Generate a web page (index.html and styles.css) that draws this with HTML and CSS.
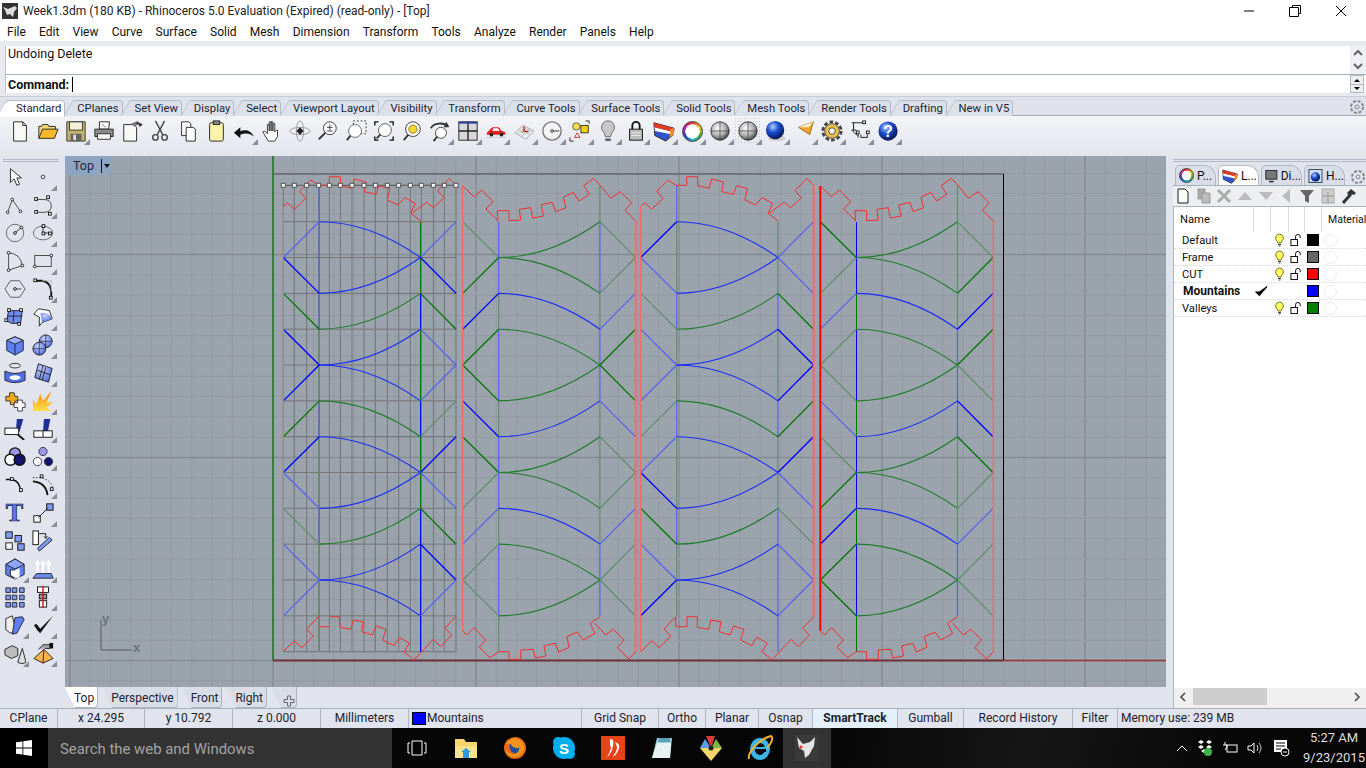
FILE: index.html
```html
<!DOCTYPE html>
<html lang="en">
<head>
<meta charset="UTF-8">
<title>Week1.3dm - Rhinoceros 5.0</title>
<link rel="stylesheet" href="styles.css">
</head>
<body>
<svg class="defs" aria-hidden="true">
  <defs>
    <radialGradient id="steel" cx="40%" cy="35%" r="70%"><stop offset="0" stop-color="#fff"/><stop offset="0.6" stop-color="#aaa"/><stop offset="1" stop-color="#333"/></radialGradient>
    <radialGradient id="navy" cx="38%" cy="32%" r="70%"><stop offset="0" stop-color="#bcd0ff"/><stop offset="0.45" stop-color="#1c4fd0"/><stop offset="1" stop-color="#04124e"/></radialGradient>
    <radialGradient id="pale" cx="40%" cy="30%" r="75%"><stop offset="0" stop-color="#c6d3fb"/><stop offset="1" stop-color="#4c68d8"/></radialGradient>
    <linearGradient id="flame" x1="0" y1="0" x2="0" y2="1"><stop offset="0" stop-color="#f58a00"/><stop offset="1" stop-color="#ffe14a"/></linearGradient>
    <symbol id="bulb" viewBox="0 0 12 14"><path d="M6 1a4 4 0 0 0-2.500 7c.7.7 1 1.300 1 2h3c0-.7.3-1.300 1-2A4 4 0 0 0 6 1z" fill="#ffff66" stroke="#77771a"/><path d="M4.500 11.500h3M5 13h2" stroke="#444" fill="none"/></symbol>
    <symbol id="lock" viewBox="0 0 14 14"><rect x="1" y="6.500" width="7" height="6.500" fill="#fff" stroke="#000"/><path d="M6 6.500V3.500a2.500 2.500 0 0 1 5 0V5" fill="none" stroke="#000"/></symbol>
    <symbol id="layersicon" viewBox="0 0 24 24"><path d="M1 3l22 6-1 7-8 7L2 17z" fill="#2f56c8" stroke="#222"/><path d="M1.500 8l21 5-.3 3-20-4z" fill="#fff"/><path d="M1 3l22 6-.5 4L1.500 8z" fill="#e23b1e"/><path d="M23 9l-1 7-4 3 1-9z" fill="#f09030"/></symbol>
  </defs>
</svg>

<div class="app">
  <header class="titlebar">
    <svg class="appicon" width="16" height="16" viewBox="0 0 16 16"><rect width="16" height="16" fill="#333"/><path d="M1 4l5 2 7-3 2 2-3 4-1 5-3-3-3 1-2-5z" fill="#ddd"/></svg>
    <span class="title">Week1.3dm (180 KB) - Rhinoceros 5.0 Evaluation (Expired) (read-only) - [Top]</span>
    <div class="winctl">
      <svg width="12" height="12" viewBox="0 0 12 12"><path d="M1 6h10" stroke="#000"/></svg>
      <svg width="12" height="12" viewBox="0 0 12 12"><path d="M3.500 2.500v-2h8v8h-2M.5 2.500h9v9h-9z" fill="none" stroke="#000"/></svg>
      <svg width="12" height="12" viewBox="0 0 12 12"><path d="M1 1l10 10M11 1L1 11" stroke="#000"/></svg>
    </div>
  </header>

  <nav class="menubar">
    <span>File</span><span>Edit</span><span>View</span><span>Curve</span><span>Surface</span><span>Solid</span><span>Mesh</span><span>Dimension</span><span>Transform</span><span>Tools</span><span>Analyze</span><span>Render</span><span>Panels</span><span>Help</span>
  </nav>

  <section class="command">
    <div class="history">
      <span>Undoing Delete</span>
      <div class="updown">
        <svg width="10" height="8" viewBox="0 0 10 8"><path d="M1 6l4-4 4 4" fill="none" stroke="#666" stroke-width="2"/></svg>
        <svg width="10" height="8" viewBox="0 0 10 8"><path d="M1 2l4 4 4-4" fill="none" stroke="#666" stroke-width="2"/></svg>
      </div>
    </div>
    <div class="prompt">
      <b>Command:</b><i class="caret"></i>
      <div class="spin"><em class="up"></em><em class="down"></em></div>
    </div>
  </section>

  <div class="tabstrip">
    <span class="tab active">Standard</span>
    <span class="tab">CPlanes</span>
    <span class="tab">Set View</span>
    <span class="tab">Display</span>
    <span class="tab">Select</span>
    <span class="tab">Viewport Layout</span>
    <span class="tab">Visibility</span>
    <span class="tab">Transform</span>
    <span class="tab">Curve Tools</span>
    <span class="tab">Surface Tools</span>
    <span class="tab">Solid Tools</span>
    <span class="tab">Mesh Tools</span>
    <span class="tab">Render Tools</span>
    <span class="tab">Drafting</span>
    <span class="tab">New in V5</span>
    <svg class="cog" width="16" height="16" viewBox="0 0 16 16"><circle cx="8" cy="8" r="2" fill="none" stroke="#888"/><circle cx="8" cy="8" r="6" fill="none" stroke="#888" stroke-width="2" stroke-dasharray="3 1.700"/></svg>
  </div>

  <div class="toolbar">
    <div class="btn"><svg viewBox="0 0 24 24"><path d="M5 2h10l4 4v17H5z" fill="#f8f8f4" stroke="#222"/><path d="M15 2v4h4" fill="none" stroke="#222"/></svg></div>
    <div class="btn"><svg viewBox="0 0 24 24"><path d="M2 20V7h3l1-2h6l1 2h7v3" fill="#f4d77a" stroke="#222"/><path d="M2 20l4-10h17l-4 10z" fill="#f6b92c" stroke="#222"/></svg></div>
    <div class="btn more"><svg viewBox="0 0 24 24"><path d="M2 2h20v21H2z" fill="#c4b268" stroke="#333"/><rect x="5" y="2" width="14" height="9" fill="#f4f0d8" stroke="#333"/><rect x="6" y="15" width="12" height="8" fill="#666"/><rect x="9" y="16" width="3" height="6" fill="#ddd"/></svg></div>
    <div class="btn"><svg viewBox="0 0 24 24"><path d="M7 2h11l-1 8H7z" fill="#fff" stroke="#222"/><path d="M2 10h20v8H2z" fill="#8d8d8d" stroke="#222"/><path d="M5 15h14v6H5z" fill="#fff" stroke="#222"/><path d="M10 5l4 3" stroke="#777"/></svg></div>
    <div class="btn"><svg viewBox="0 0 24 24"><path d="M3 5h11l3 3v15H3z" fill="#f8f8f4" stroke="#222"/><path d="M11 4l7-3 3 3-7 3z" fill="#777"/><path d="M17 3l5 2-2 2" fill="none" stroke="#333" stroke-width="2"/></svg></div>
    <div class="btn"><svg viewBox="0 0 24 24"><path d="M7 1l8 15M17 1L9 16" stroke="#444" stroke-width="1.500"/><circle cx="7" cy="19" r="3" fill="none" stroke="#444" stroke-width="1.500"/><circle cx="17" cy="19" r="3" fill="none" stroke="#444" stroke-width="1.500"/></svg></div>
    <div class="btn"><svg viewBox="0 0 24 24"><path d="M5 2h8l2 2v13H5z" fill="#fff" stroke="#222"/><path d="M10 8h8l2 2v13H10z" fill="#fff" stroke="#222"/></svg></div>
    <div class="btn"><svg viewBox="0 0 24 24"><rect x="5" y="3" width="15" height="20" rx="2" fill="#fbf3a8" stroke="#222"/><rect x="9" y="1" width="7" height="4" fill="#888" stroke="#222"/></svg></div>
    <div class="btn more"><svg viewBox="0 0 24 24"><path d="M1 14l7-6v4c6-2 11-1 15 6-5-4-10-4-15-2v4z" fill="#111"/></svg></div>
    <div class="btn"><svg viewBox="0 0 24 24"><path d="M8 23L2 13l2-1 3 3V5h2v7V2h2v10V2h2v10V4h2v9l2-2h1v7l-3 5z" fill="#fff" stroke="#333"/></svg></div>
    <div class="btn"><svg viewBox="0 0 24 24"><ellipse cx="12" cy="12" rx="11" ry="4" fill="none" stroke="#999"/><ellipse cx="12" cy="12" rx="4" ry="11" fill="none" stroke="#999"/><path d="M12 8l-4 4h8zM12 16l4-4H8z" fill="#222"/></svg></div>
    <div class="btn"><svg viewBox="0 0 24 24"><circle cx="14" cy="9" r="7" fill="#fff" stroke="#333"/><path d="M9 14l-7 7" stroke="#333" stroke-width="2"/><path d="M11 8h6M14 5v6M11 12h6" stroke="#333"/></svg></div>
    <div class="btn"><svg viewBox="0 0 24 24"><rect x="9" y="1" width="14" height="14" fill="none" stroke="#333" stroke-dasharray="2 2"/><circle cx="11" cy="12" r="7" fill="#fff" stroke="#666"/><path d="M6 17l-4 5" stroke="#333" stroke-width="2"/></svg></div>
    <div class="btn"><svg viewBox="0 0 24 24"><path d="M2 6V2h4M18 2h4v4M2 18v4h4M18 22h4v-4" fill="none" stroke="#111" stroke-width="1.500"/><circle cx="13" cy="11" r="7" fill="#fff" stroke="#555"/><path d="M8 16l-4 4" stroke="#333" stroke-width="2"/></svg></div>
    <div class="btn"><svg viewBox="0 0 24 24"><circle cx="13" cy="10" r="8" fill="#fff" stroke="#333"/><circle cx="13" cy="10" r="4.500" fill="#f2d433" stroke="#8a7a20"/><path d="M8 16l-5 6" stroke="#333" stroke-width="2"/></svg></div>
    <div class="btn more"><svg viewBox="0 0 24 24"><path d="M2 9a11 8 0 0 1 19-2" fill="none" stroke="#333" stroke-width="2"/><path d="M19 2l3 6-6 0z" fill="#333"/><circle cx="13" cy="14" r="6" fill="#fff" stroke="#444"/><path d="M9 18l-4 5" stroke="#333" stroke-width="2"/></svg></div>
    <div class="btn more"><svg viewBox="0 0 24 24"><rect x="2" y="2" width="20" height="20" fill="#d8d8d8" stroke="#222"/><path d="M12 2v20M2 12h20" stroke="#222" stroke-width="1.500"/><rect x="2" y="2" width="20" height="2" fill="#2743a8"/></svg></div>
    <div class="btn more"><svg viewBox="0 0 24 24"><path d="M2 14l3-3 3-3h7l3 4 4 1v3H2z" fill="#e02020"/><path d="M9 9h5l2 3H8z" fill="#fff"/><circle cx="7" cy="16" r="2" fill="#222"/><circle cx="18" cy="16" r="2" fill="#222"/><path d="M1 19h22" stroke="#ccc"/></svg></div>
    <div class="btn more"><svg viewBox="0 0 24 24"><path d="M2 14l9-8 12 6-9 9z" fill="none" stroke="#aaa"/><path d="M6 10l12 6M10 7l11 6M5 15l9-8M9 18l9-8" stroke="#bbb"/><path d="M12 12V7M12 12l5 1" stroke="#c22" stroke-width="1.500"/><path d="M12 12l-3 2" stroke="#292"/></svg></div>
    <div class="btn more"><svg viewBox="0 0 24 24"><circle cx="12" cy="12" r="10" fill="#f4f4f4" stroke="#777" stroke-width="1.500"/><circle cx="12" cy="12" r="1.500" fill="#fff" stroke="#333"/><path d="M13 12h7" stroke="#333"/></svg></div>
    <div class="btn more"><svg viewBox="0 0 24 24"><circle cx="8" cy="7" r="4" fill="#f4e04a" stroke="#555"/><rect x="13" y="6" width="8" height="8" fill="#f4d000" stroke="#333"/><path d="M6 19l3-5 3 5z" fill="#f4f4f4" stroke="#b33"/><path d="M18 1h4v3M1 19v4h4" fill="none" stroke="#222"/></svg></div>
    <div class="btn more"><svg viewBox="0 0 24 24"><path d="M12 1a7 7 0 0 0-5 12c1 1 2 3 2 5h6c0-2 1-4 2-5a7 7 0 0 0-5-12z" fill="#c8c8c8" stroke="#666"/><path d="M9 20h6v3H9z" fill="#666"/></svg></div>
    <div class="btn more"><svg viewBox="0 0 24 24"><rect x="5" y="10" width="14" height="12" fill="#bbb" stroke="#111"/><path d="M8 10V6a4 4 0 0 1 8 0v4" fill="none" stroke="#111" stroke-width="2"/><path d="M7 14h10M7 17h10" stroke="#eee"/></svg></div>
    <div class="btn more"><svg><use href="#layersicon"/></svg></div>
    <div class="btn more"><span class="wheel"></span></div>
    <div class="btn more"><svg viewBox="0 0 24 24"><circle cx="12" cy="12" r="10" fill="url(#steel)" stroke="#333"/><path d="M2 12h20M12 2v20" stroke="#444" stroke-width="0.800"/></svg></div>
    <div class="btn more dotted"><svg viewBox="0 0 24 24"><circle cx="12" cy="12" r="10" fill="url(#steel)" stroke="#333"/><path d="M2 12h20M12 2v20" stroke="#444" stroke-width="0.800"/></svg></div>
    <div class="btn more"><svg viewBox="0 0 24 24"><ellipse cx="13" cy="20" rx="10" ry="3" fill="#ccc"/><circle cx="11" cy="11" r="10" fill="url(#navy)"/></svg></div>
    <div class="btn more nudge"><svg viewBox="0 0 24 24"><path d="M4 8L20 2l-4 14z" fill="#f4a12c" stroke="#8a6a20"/><path d="M4 8l16-6-5 6z" fill="#fff3c0"/></svg></div>
    <div class="btn more"><svg viewBox="0 0 24 24"><circle cx="12" cy="12" r="8" fill="#e8c04a" stroke="#444"/><circle cx="12" cy="12" r="10" fill="none" stroke="#444" stroke-width="3" stroke-dasharray="4 2.300"/><circle cx="12" cy="12" r="3.500" fill="#fff" stroke="#444"/></svg></div>
    <div class="btn more"><svg viewBox="0 0 24 24"><path d="M3 3h5M3 11h5M5 3v8M8 3h9M13 19h7M10 14v5M13 19v-3M20 19v-3M3 11l6 6" fill="none" stroke="#111"/><rect x="15" y="1" width="3" height="3" fill="#fff" stroke="#111"/><rect x="8" y="12" width="3" height="3" fill="#fff" stroke="#111"/><rect x="19" y="12" width="3" height="3" fill="#fff" stroke="#111"/></svg></div>
    <div class="btn more"><svg viewBox="0 0 24 24"><circle cx="12" cy="12" r="10.500" fill="url(#navy)"/><text x="12" y="18" text-anchor="middle" class="qmark">?</text></svg></div>
  </div>

  <div class="workspace">
    <aside class="tools">
      <div class="grip"></div>
      <div class="toolgrid">
        <div class="btn"><svg viewBox="0 0 24 24"><path d="M7 3v15l4-4 3 7 3-1-3-7h5z" fill="#fff" stroke="#222"/></svg></div>
        <div class="btn more"><svg viewBox="0 0 24 24"><circle cx="12" cy="12" r="2" fill="#fff" stroke="#333"/></svg></div>
        <div class="btn"><svg viewBox="0 0 24 24"><path d="M4 20L9 6l9 13" fill="none" stroke="#444"/><circle cx="4" cy="20" r="1.500" fill="#fff" stroke="#222"/><circle cx="9" cy="6" r="1.500" fill="#fff" stroke="#222"/><circle cx="18" cy="19" r="1.500" fill="#fff" stroke="#222"/></svg></div>
        <div class="btn more"><svg viewBox="0 0 24 24"><path d="M5 6h8q8 0 8 7 0 7-8 7H5" fill="none" stroke="#444"/><rect x="3" y="4" width="3" height="3" fill="#fff" stroke="#111"/><rect x="16" y="2" width="3" height="3" fill="#fff" stroke="#111"/><rect x="3" y="18" width="3" height="3" fill="#fff" stroke="#111"/><rect x="18" y="20" width="3" height="3" fill="#fff" stroke="#111"/></svg></div>
        <div class="btn"><svg viewBox="0 0 24 24"><circle cx="12" cy="12" r="9.500" fill="none" stroke="#666"/><path d="M12 12l7-6" stroke="#333"/><circle cx="12" cy="12" r="1.500" fill="#fff" stroke="#111"/><circle cx="19" cy="6" r="1.500" fill="#fff" stroke="#111"/></svg></div>
        <div class="btn more"><svg viewBox="0 0 24 24"><ellipse cx="12" cy="12" rx="10.500" ry="7.500" fill="none" stroke="#666"/><path d="M12 12h8M12 12V5" stroke="#333"/><rect x="11" y="3" width="3" height="3" fill="#fff" stroke="#111"/><rect x="11" y="11" width="3" height="3" fill="#fff" stroke="#111"/><rect x="18" y="11" width="3" height="3" fill="#fff" stroke="#111"/></svg></div>
        <div class="btn"><svg viewBox="0 0 24 24"><path d="M5 3q13 1 15 14L5 22z" fill="none" stroke="#444"/><circle cx="5" cy="3" r="1.500" fill="#fff" stroke="#111"/><circle cx="20" cy="17" r="1.500" fill="#fff" stroke="#111"/><circle cx="5" cy="22" r="1.500" fill="#fff" stroke="#111"/></svg></div>
        <div class="btn more"><svg viewBox="0 0 24 24"><rect x="3" y="6" width="18" height="12" fill="none" stroke="#444"/><circle cx="3" cy="18" r="1.500" fill="#fff" stroke="#111"/><circle cx="21" cy="6" r="1.500" fill="#fff" stroke="#111"/></svg></div>
        <div class="btn"><svg viewBox="0 0 24 24"><path d="M7 3h10l6 9-6 9H7L1 12z" fill="none" stroke="#555"/><path d="M12 12h7" stroke="#333"/><circle cx="12" cy="12" r="1.500" fill="#fff" stroke="#111"/></svg></div>
        <div class="btn more"><svg viewBox="0 0 24 24"><path d="M4 3h7q9 1 10 12v7" fill="none" stroke="#111" stroke-width="2"/><path d="M11 3h10v12" fill="none" stroke="#bbb"/><rect x="2" y="1" width="3" height="3" fill="#fff" stroke="#111"/><rect x="19" y="20" width="3" height="3" fill="#fff" stroke="#111"/></svg></div>
        <div class="btn"><svg viewBox="0 0 24 24"><path d="M5 5h15l-2 14H8l-5-3z" fill="#6d8ce8" stroke="#223"/><path d="M11 5l-1 13M4 11h16" stroke="#223"/><rect x="4" y="3" width="3" height="3" fill="#fff" stroke="#111"/><rect x="17" y="3" width="3" height="3" fill="#fff" stroke="#111"/><rect x="1" y="14" width="3" height="3" fill="#fff" stroke="#111"/><rect x="15" y="18" width="3" height="3" fill="#fff" stroke="#111"/></svg></div>
        <div class="btn more"><svg viewBox="0 0 24 24"><path d="M2 9l5-6 12 2 3 9-11 4-3 4V12z" fill="#fff" stroke="#222"/><path d="M9 8q8-3 13 6l-11 4z" fill="url(#pale)"/></svg></div>
        <div class="btn"><svg viewBox="0 0 24 24"><path d="M3 7l9-4 9 4v11l-9 5-9-5z" fill="#5f7ef0" stroke="#223"/><path d="M3 7l9 4 9-4-9-4z" fill="#9db2fa" stroke="#223"/><path d="M12 11v12" stroke="#223"/></svg></div>
        <div class="btn more"><svg viewBox="0 0 24 24"><circle cx="15" cy="8" r="7" fill="url(#pale)" stroke="#223"/><circle cx="8" cy="16" r="7" fill="url(#pale)" stroke="#223"/><path d="M8 9v14M1 16h14M15 1v14M8 8h14" stroke="#223" stroke-width="0.700"/></svg></div>
        <div class="btn"><svg viewBox="0 0 24 24"><ellipse cx="12" cy="4" rx="6" ry="2.500" fill="none" stroke="#333"/><path d="M1 10q11 5 22 0v10q-11 5-22 0z" fill="#4f6fe8" stroke="#223"/><ellipse cx="12" cy="17" rx="6" ry="2.500" fill="#fff"/></svg></div>
        <div class="btn more"><svg viewBox="0 0 24 24"><path d="M7 2l15 5-4 15-15-5z" fill="url(#pale)" stroke="#223"/><path d="M6 9l14 5M12 4L8 19M15 6l-4 14" stroke="#223"/></svg></div>
        <div class="btn"><svg viewBox="0 0 24 24"><path d="M2 7h4V3h5l1 4h3v5h-3l-1 4H7v-4H2z" fill="#f0a818" stroke="#333"/><path d="M11 14h4v-3h5v3h3v5h-3v4h-5v-4h-4z" fill="#fff" stroke="#333"/></svg></div>
        <div class="btn more"><svg viewBox="0 0 24 24"><path d="M1 23V11l4 4L9 4l3 8 9-11-5 13 7-1-7 6 5 4z" fill="url(#flame)"/></svg></div>
        <div class="btn"><svg viewBox="0 0 24 24"><path d="M14 1h7l-4 14h-4z" fill="#1d2f98"/><rect x="1" y="11" width="15" height="7" fill="#fff" stroke="#111"/><path d="M15 18l7 6" stroke="#111" stroke-width="2"/></svg></div>
        <div class="btn more"><svg viewBox="0 0 24 24"><path d="M13 1h7l-3 15h-5z" fill="#1d2f98"/><rect x="2" y="14" width="20" height="7" fill="#fff" stroke="#111"/><path d="M12 14v7" stroke="#111"/></svg></div>
        <div class="btn"><svg viewBox="0 0 24 24"><circle cx="12" cy="8" r="6" fill="#9a97e8" stroke="#111" stroke-width="1.500"/><circle cx="7" cy="15" r="6" fill="#fff" stroke="#111" stroke-width="1.500"/><circle cx="17" cy="15" r="6" fill="#14146c" stroke="#111" stroke-width="1.500"/></svg></div>
        <div class="btn more"><svg viewBox="0 0 24 24"><circle cx="12" cy="6" r="4.500" fill="#9a97e8" stroke="#334"/><circle cx="6" cy="17" r="4.500" fill="#fff" stroke="#334"/><circle cx="18" cy="17" r="4.500" fill="#14146c" stroke="#334"/></svg></div>
        <div class="btn"><svg viewBox="0 0 24 24"><path d="M2 6h7q9 2 9 14" fill="none" stroke="#111" stroke-width="1.500"/><rect x="7" y="4" width="3" height="3" fill="#fff" stroke="#111"/><rect x="17" y="16" width="3" height="3" fill="#fff" stroke="#111"/></svg></div>
        <div class="btn more"><svg viewBox="0 0 24 24"><path d="M1 8q14 1 16 15" fill="none" stroke="#111" stroke-width="2"/><path d="M1 4h8q12 2 14 13" fill="none" stroke="#111" stroke-dasharray="1.500 2"/><rect x="9" y="1" width="3" height="3" fill="#fff" stroke="#111"/><rect x="20" y="15" width="3" height="3" fill="#fff" stroke="#111"/></svg></div>
        <div class="btn"><span class="bigt">T</span></div>
        <div class="btn more"><svg viewBox="0 0 24 24"><rect x="2" y="15" width="7" height="7" fill="#fff" stroke="#111"/><rect x="16" y="2" width="7" height="7" fill="#7e9bf0" stroke="#111"/><path d="M7 17l10-10" stroke="#111"/></svg></div>
        <div class="btn"><svg viewBox="0 0 24 24"><rect x="2" y="2" width="7" height="7" fill="#7e9bf0" stroke="#111"/><rect x="12" y="6" width="7" height="7" fill="#7e9bf0" stroke="#111"/><rect x="2" y="14" width="7" height="7" fill="#fff" stroke="#111"/><rect x="15" y="15" width="7" height="7" fill="#7e9bf0" stroke="#111"/></svg></div>
        <div class="btn"><svg viewBox="0 0 24 24"><rect x="1" y="1" width="6" height="15" fill="#fff" stroke="#111"/><path d="M8 23l-2-3L19 8l3 3z" fill="#7e9bf0" stroke="#223"/><path d="M8 4h7v5M13 7l2 2 2-2" fill="none" stroke="#111"/></svg></div>
        <div class="btn more"><svg viewBox="0 0 24 24"><path d="M2 7l10-6 10 6v11l-10 5-10-5z" fill="#5f7ef0" stroke="#223"/><path d="M2 7l10 5 10-5-10-6z" fill="#8ea6f8" stroke="#223"/><path d="M11 14l6-3v10l-6 2z" fill="#fff"/><path d="M12 13H7v6l5 3" fill="#fff" stroke="#222"/></svg></div>
        <div class="btn more"><svg viewBox="0 0 24 24"><path d="M1 22l4-5h16l2 5z" fill="#6d8ce8" stroke="#223"/><path d="M6 16V4M12 16V4M18 16V4M4 7l2-3 2 3M10 7l2-3 2 3M16 7l2-3 2 3" fill="none" stroke="#fff" stroke-width="2"/></svg></div>
        <div class="btn"><svg viewBox="0 0 24 24"><path d="M2 2h5v5H2zM9 2h5v5H9zM17 2h5v5h-5zM2 10h5v5H2zM9 10h5v5H9zM17 10h5v5h-5zM2 18h5v5H2zM9 18h5v5H9zM17 18h5v5h-5z" fill="#7e9bf0" stroke="#223"/></svg></div>
        <div class="btn more"><svg viewBox="0 0 24 24"><rect x="6" y="1" width="12" height="6" fill="#fff" stroke="#111"/><rect x="8" y="9" width="8" height="5" fill="#999" stroke="#111"/><rect x="8" y="16" width="8" height="7" fill="#fff" stroke="#111"/><path d="M12 0v24" stroke="#c11" stroke-width="1.500"/></svg></div>
        <div class="btn more"><svg viewBox="0 0 24 24"><path d="M2 5l7-3 4 16-6 3-5-4z" fill="#eee" stroke="#222"/><path d="M12 4l8-1 2 3-8 15-5 1z" fill="#5f7ef0" stroke="#223"/></svg></div>
        <div class="btn more"><svg viewBox="0 0 24 24"><path d="M2 12l4 6 3 3L23 2l-14 14-4-5z" fill="#111"/></svg></div>
        <div class="btn more"><svg viewBox="0 0 24 24"><path d="M1 8l8-4 6 3v8l-7 3-7-4z" fill="#bdbdbd" stroke="#222"/><path d="M15 22l5-15 4 15c-3 2-6 2-9 0z" fill="#ddd" stroke="#222"/></svg></div>
        <div class="btn more"><svg viewBox="0 0 24 24"><path d="M2 18L13 8l10 10-11 5z" fill="#f5b452" stroke="#222"/><path d="M13 8l-1 15" stroke="#222"/><path d="M7 8l5-5h8v4h-6" fill="#aaa" stroke="#222"/><rect x="19" y="1" width="4" height="6" fill="#111"/></svg></div>
      </div>
    </aside>

    <main class="center">
      <div class="viewport">
        <svg id="model" viewBox="65 156 1101 531" width="1101" height="531"></svg>
        <div class="vplabel"><span>Top</span><i class="vpdrop"></i></div>
      </div>
      <div class="vtabs">
        <span class="vtab active">Top</span>
        <span class="vtab">Perspective</span>
        <span class="vtab">Front</span>
        <span class="vtab">Right</span>
        <span class="vtab plus">
          <svg width="12" height="12" viewBox="0 0 12 12"><path d="M4.500 1h3v3.500H11v3H7.500V11h-3V7.500H1v-3h3.500z" fill="none" stroke="#666"/></svg>
        </span>
      </div>
    </main>

    <aside class="panel">
      <div class="grip"></div>
      <div class="ptabs">
        <span class="ptab"><span class="wheel small"></span>P...</span>
        <span class="ptab active"><svg width="16" height="16"><use href="#layersicon"/></svg>L...</span>
        <span class="ptab"><svg width="16" height="16" viewBox="0 0 16 16"><rect x="1" y="1" width="14" height="11" fill="#777" stroke="#111"/><path d="M5 15h6" stroke="#333" stroke-width="2"/></svg>Di...</span>
        <span class="ptab"><svg width="16" height="16" viewBox="0 0 16 16"><rect x="1" y="1" width="14" height="14" fill="#cfdcf5" stroke="#345"/><circle cx="8" cy="9" r="5" fill="url(#navy)"/></svg>H...</span>
        <svg class="cog" width="16" height="16" viewBox="0 0 16 16"><circle cx="8" cy="8" r="2" fill="none" stroke="#888"/><circle cx="8" cy="8" r="6" fill="none" stroke="#888" stroke-width="2" stroke-dasharray="3 1.700"/></svg>
      </div>
      <div class="ptools">
        <svg viewBox="0 0 16 16"><path d="M3 1h7l3 3v11H3z" fill="#fafaf6" stroke="#222"/></svg>
        <svg viewBox="0 0 16 16"><path d="M2 1h7v10H2z" fill="#aaa" stroke="#999"/><path d="M6 5h8v10H6z" fill="#bbb" stroke="#999"/></svg>
        <svg viewBox="0 0 16 16"><path d="M2 2l12 12M14 2L2 14" stroke="#aaa" stroke-width="3"/></svg>
        <svg viewBox="0 0 16 16"><path d="M1 12l7-8 7 8z" fill="#bbb"/></svg>
        <svg viewBox="0 0 16 16"><path d="M1 4l7 8 7-8z" fill="#bbb"/></svg>
        <svg viewBox="0 0 16 16"><path d="M12 1v14L4 8z" fill="#bbb"/></svg>
        <svg viewBox="0 0 16 16"><path d="M1 2h14L10 8v7l-4-2V8z" fill="#666"/></svg>
        <svg viewBox="0 0 16 16"><rect x="2" y="1" width="12" height="14" fill="#ccc" stroke="#aaa"/><path d="M2 8h12M8 4v11" stroke="#999"/></svg>
        <svg viewBox="0 0 16 16"><path d="M2 15l8-9" stroke="#333" stroke-width="3"/><path d="M6 5l4-4 5 4-2 2-3-1-2 2z" fill="#333"/></svg>
      </div>
      <div class="layers">
        <div class="lhead"><span>Name</span><i></i><i></i><i></i><i></i><span class="mat">Material</span></div>
        <div class="lrow"><span>Default</span><i></i><svg class="ic"><use href="#bulb"/></svg><svg class="ic"><use href="#lock"/></svg><b class="swatch black"></b><em class="mball"></em></div>
        <div class="lrow"><span>Frame</span><i></i><svg class="ic"><use href="#bulb"/></svg><svg class="ic"><use href="#lock"/></svg><b class="swatch gray"></b><em class="mball"></em></div>
        <div class="lrow"><span>CUT</span><i></i><svg class="ic"><use href="#bulb"/></svg><svg class="ic"><use href="#lock"/></svg><b class="swatch red"></b><em class="mball"></em></div>
        <div class="lrow current"><span>Mountains</span><svg class="ic" viewBox="0 0 12 12"><path d="M1 7l3 3 7-8-7 5z" fill="#000" stroke="#000"/></svg><i></i><i></i><b class="swatch blue"></b><em class="mball"></em></div>
        <div class="lrow"><span>Valleys</span><i></i><svg class="ic"><use href="#bulb"/></svg><svg class="ic"><use href="#lock"/></svg><b class="swatch green"></b><em class="mball"></em></div>
      </div>
      <div class="hscroll">
        <svg width="8" height="10" viewBox="0 0 8 10"><path d="M6 1L2 5l4 4" fill="none" stroke="#444" stroke-width="1.500"/></svg>
        <div class="track"><div class="thumb"></div></div>
        <svg width="8" height="10" viewBox="0 0 8 10"><path d="M2 1l4 4-4 4" fill="none" stroke="#444" stroke-width="1.500"/></svg>
      </div>
    </aside>
  </div>

  <footer class="status">
    <span>CPlane</span>
    <span>x 24.295</span>
    <span>y 10.792</span>
    <span>z 0.000</span>
    <span>Millimeters</span>
    <span class="layercell"><b class="swatch blue"></b>Mountains</span>
    <span>Grid Snap</span>
    <span>Ortho</span>
    <span>Planar</span>
    <span>Osnap</span>
    <span class="on">SmartTrack</span>
    <span>Gumball</span>
    <span>Record History</span>
    <span>Filter</span>
    <span class="memory">Memory use: 239 MB</span>
  </footer>

  <div class="taskbar">
    <div class="start"><svg width="16" height="16" viewBox="0 0 16 16"><path d="M0 2.300l6.500-.9v6.200H0zM7.300 1.300L16 0v7.600H7.300zM0 8.400h6.500v6.200L0 13.700zM7.300 8.400H16V16l-8.700-1.300z" fill="#fff"/></svg></div>
    <div class="search">Search the web and Windows</div>
    <div class="tasks">
      <div class="task"><svg width="20" height="16" viewBox="0 0 20 16"><path d="M5 1h10v14H5zM3 3H1v10h2M17 3h2v10h-2" fill="none" stroke="#fff"/></svg></div>
      <div class="task"><svg width="24" height="22" viewBox="0 0 24 22"><path d="M1 2h9l2 3h11v16H1z" fill="#f6d56a"/><path d="M1 9h22v12H1z" fill="#fbe38e"/><path d="M9 14h6v7H9z" fill="#2b9be0"/><path d="M7 15l5-4 5 4z" fill="#2b9be0"/></svg></div>
      <div class="task"><svg width="24" height="24" viewBox="0 0 24 24"><circle cx="12" cy="12" r="11" fill="#e8671a"/><circle cx="13" cy="11" r="6.500" fill="#1f4e9e"/><path d="M3 8c2-5 9-7 14-4 3 2 5 6 4 10-2 6-9 9-14 6C4 19 3 16 3 13c1 3 5 6 9 5 3-1 5-4 4-7-2 2-4 1-5 0-1 0-3-1-3-3-2 0-4 0-5 0z" fill="#f5941d"/></svg></div>
      <div class="task"><svg width="24" height="24" viewBox="0 0 24 24"><circle cx="12" cy="12" r="11" fill="#00aff0"/><circle cx="6" cy="6" r="5" fill="#00aff0"/><circle cx="18" cy="18" r="5" fill="#00aff0"/><text x="12" y="18" text-anchor="middle" class="skype">S</text></svg></div>
      <div class="task"><svg width="24" height="24" viewBox="0 0 24 24"><rect width="24" height="24" fill="#e8421a"/><path d="M10 3c3 0 3 5 1 11-2 4-4 7-5 7 2-3 3-6 4-9-1-3-2-9 0-9zM14 6c3 1 5 3 4 6-1 4-3 7-6 9 1-3 4-6 4-9 0-2-1-4-2-6z" fill="#fff"/></svg></div>
      <div class="task"><svg width="24" height="24" viewBox="0 0 24 24"><path d="M7 2h15l-2 20H2z" fill="#9fd0dc"/><path d="M2 22L7 7h14l-1 15z" fill="#e6f2f4"/><path d="M9 2h11v4H8z" fill="#5aa0b8"/></svg></div>
      <div class="task"><svg width="24" height="28" viewBox="0 0 24 28"><path d="M12 14l-5-12h9z" fill="#d63a3a"/><path d="M12 14L1 14l5-9z" fill="#5aa0e8"/><path d="M12 14l11 0-6-9z" fill="#7ab648"/><path d="M12 14L1 14l11 13 11-13z" fill="#f2d66a"/><circle cx="12" cy="14" r="2.500" fill="#222"/></svg></div>
      <div class="task"><svg width="26" height="26" viewBox="0 0 26 26"><ellipse cx="13" cy="14" rx="10" ry="11" fill="#3bb4ea"/><ellipse cx="13" cy="14" rx="5" ry="6" fill="#000"/><path d="M8 12h12v4H8z" fill="#3bb4ea"/><path d="M8 14h11v3H8z" fill="#000" /><path d="M2 24C0 18 12 4 24 1c3 2 0 8-4 12" fill="none" stroke="#f0b429" stroke-width="2"/></svg></div>
      <div class="task running"><svg width="24" height="26" viewBox="0 0 24 26"><rect width="24" height="26" fill="#3a3a3a"/><path d="M2 2l6 7 7-2 5-5-1 9-5 9-4 3-1-7-5-3z" fill="#e4e4e4"/><circle cx="6" cy="12" r="1.500" fill="#e33"/></svg></div>
    </div>
    <div class="tray">
      <svg width="12" height="8" viewBox="0 0 12 8"><path d="M1 7l5-5 5 5" fill="none" stroke="#fff"/></svg>
      <svg width="16" height="18" viewBox="0 0 16 18"><path d="M1 3l3-2 3 2-3 2zM9 3l3-2 3 2-3 2zM1 8l3-2 3 2-3 2zM9 8l3-2 3 2-3 2zM4 12l3-2 3 2-3 2z" fill="#fff"/><circle cx="11" cy="13" r="4" fill="#3bb44a"/></svg>
      <svg width="16" height="14" viewBox="0 0 16 14"><rect x="5" y="4" width="10" height="7" fill="none" stroke="#fff"/><path d="M3 1v3M1 4h4v2l-2 3" fill="none" stroke="#fff"/></svg>
      <svg width="16" height="14" viewBox="0 0 16 14"><path d="M1 5h3l3-3v10L4 9H1z" fill="none" stroke="#fff"/><path d="M10 4q2 3 0 6M12 2q4 5 0 10" fill="none" stroke="#ccc"/></svg>
      <svg width="18" height="18" viewBox="0 0 18 18"><path d="M2 1h13v12H2z" fill="#fff"/><path d="M4 4h9M4 7h9M4 10h5" stroke="#000"/><circle cx="13" cy="13" r="4" fill="#000" stroke="#fff"/><path d="M11 13h4" stroke="#fff"/></svg>
      <div class="clock">5:27 AM<br>9/23/2015</div>
    </div>
  </div>
</div>
<script src="script.js"></script>
</body>
</html>
```
FILE: styles.css
```css
* {
  margin: 0;
  padding: 0;
  box-sizing: border-box;
}

body {
  width: 1366px;
  height: 768px;
  overflow: hidden;
  background: #e1e4ec;
  font-family: Roboto, "Liberation Sans", sans-serif;
  font-size: 12px;
  color: #111;
}

.defs {
  position: absolute;
  width: 0;
  height: 0;
}

.app {
  display: flex;
  flex-direction: column;
  height: 768px;
}

/* title and menu */
.titlebar {
  display: flex;
  align-items: center;
  height: 22px;
  padding-left: 2px;
  background: #fff;
}

.appicon {
  margin-right: 5px;
}

.title {
  color: #222;
}

.winctl {
  display: flex;
  gap: 34px;
  margin-left: auto;
  padding-right: 19px;
}

.menubar {
  display: flex;
  align-items: center;
  gap: 13.200px;
  height: 19px;
  padding: 1px 0 0 7px;
  background: #fff;
}

/* command area */
.command {
  padding: 5px 0 3px 5px;
  background: #e8eaf0;
}

.history {
  display: flex;
  justify-content: space-between;
  height: 28px;
  padding-left: 2px;
  background: #fff;
  border-left: 1px solid #b9bec9;
  font-size: 12.500px;
  line-height: 16px;
}

.updown {
  display: flex;
  flex-direction: column;
  gap: 5px;
  width: 16px;
  padding: 3px 3px;
  background: #eef0f4;
}

.prompt {
  display: flex;
  align-items: center;
  height: 19px;
  padding-left: 2px;
  background: #fff;
  border-top: 1px solid #a6aeba;
  border-left: 1px solid #b9bec9;
  font-size: 12.500px;
}

.caret {
  width: 1px;
  height: 15px;
  margin-left: 3px;
  background: #000;
}

.spin {
  display: flex;
  flex-direction: column;
  width: 14px;
  height: 18px;
  margin-left: auto;
  margin-right: 2px;
  background: #eef0f4;
  border: 1px solid #b5b8bf;
}

.spin em {
  position: relative;
  flex: 1;
}

.spin .up {
  border-bottom: 1px solid #b5b8bf;
}

.spin em::after {
  content: "";
  position: absolute;
  left: 3px;
  top: 2px;
  border: 3px solid transparent;
}

.spin .up::after {
  top: 0;
  border-bottom-color: #000;
}

.spin .down::after {
  border-top-color: #000;
}

/* toolbar tabs */
.tabstrip {
  position: relative;
  display: flex;
  height: 20px;
  padding: 3px 0 0 7px;
  background: #dfe2ea;
  border-top: 1px solid #c8ccd5;
  border-bottom: 1px solid #a4a9b4;
}

.tab {
  position: relative;
  height: 16px;
  margin-right: 8.800px;
  padding: 0 3px;
  font-size: 11.300px;
  line-height: 16px;
  background: #dce0ea;
  border-top: 1px solid #b7bbc7;
  border-right: 1px solid #b7bbc7;
  border-radius: 0 4px 0 0;
  white-space: nowrap;
  color: #1c2430;
}

.tab::before {
  content: "";
  position: absolute;
  left: -6px;
  top: -1px;
  bottom: 0;
  width: 10px;
  background: inherit;
  border-top: 1px solid #b7bbc7;
  border-left: 1px solid #b7bbc7;
  border-radius: 3px 0 0 0;
  transform: skewX(-30deg);
  z-index: -1;
}

.tab.active {
  height: 17px;
  padding-left: 9px;
  background: #fff;
}

.tabstrip .tab {
  z-index: 1;
}

.tabstrip .cog {
  position: absolute;
  right: 1px;
  top: 2px;
}

.toolbar {
  display: flex;
  height: 40px;
  padding: 1px 0 0 6px;
  background: linear-gradient(#f3f4f7, #e2e5ec);
}

.btn {
  position: relative;
  display: flex;
  align-items: center;
  justify-content: center;
  flex: none;
  width: 28px;
  height: 28px;
}

.btn svg {
  width: 22px;
  height: 22px;
}

.more::after {
  content: "";
  position: absolute;
  right: 0;
  bottom: 0;
  border-style: solid;
  border-width: 0 0 6px 6px;
  border-color: transparent transparent #8a8d93 transparent;
}

.dotted {
  background-image: radial-gradient(#c2c4c9 0.6px, transparent 0.8px);
  background-size: 3px 3px;
}

.nudge svg {
  margin-left: 4px;
}

.wheel {
  display: block;
  width: 21px;
  height: 21px;
  border-radius: 50%;
  background: radial-gradient(#fff 0 52%, transparent 55%), conic-gradient(#e33, #f2c413, #3aa83a, #20b0c8, #2540c8, #c020b0, #e33);
  border: 1px solid #444;
}

.wheel.small {
  width: 15px;
  height: 15px;
}

.qmark {
  font: bold 17px "Liberation Sans", sans-serif;
  fill: #fff;
}

.bigt {
  font: bold 26px/26px "Liberation Serif", serif;
  color: #5f7ef0;
  -webkit-text-stroke: 0.7px #112;
}

.skype {
  font: bold 15px "Liberation Sans", sans-serif;
  fill: #fff;
}

/* main area */
.workspace {
  display: flex;
  height: 552px;
}

.tools {
  flex: none;
  width: 65px;
  padding-top: 3px;
  background: #e1e4ec;
}

.grip {
  height: 3px;
  margin: 0 6px 0 3px;
  border-top: 1px solid #b6bac4;
  border-bottom: 1px solid #b6bac4;
}

.toolgrid {
  display: grid;
  grid-template-columns: 29px 28px;
  grid-auto-rows: 28px;
  margin-top: 1px;
}

.toolgrid .btn {
  width: auto;
}

.center {
  display: flex;
  flex-direction: column;
  flex: none;
  width: 1101px;
}

.viewport {
  position: relative;
  height: 531px;
  overflow: hidden;
  background: #9ba3ad;
}

#model {
  display: block;
}

.vplabel {
  position: absolute;
  left: 0;
  top: 0;
  display: flex;
  align-items: center;
  width: 46px;
  height: 19px;
  padding-left: 8px;
  background: #8ea5c2;
  font-size: 12.500px;
  color: #1a2a3a;
}

.vplabel span {
  width: 28px;
}

.vpdrop {
  position: relative;
  height: 14px;
  border-left: 1px solid #111;
}

.vpdrop::after {
  content: "";
  position: absolute;
  left: 2px;
  top: 5px;
  border: 3px solid transparent;
  border-top: 4px solid #111;
}

.vtabs {
  display: flex;
  height: 21px;
}

.vtab {
  position: relative;
  height: 21px;
  margin-right: 4px;
  padding: 0 3px 0 9px;
  line-height: 22px;
  background: #d9dde8;
  border-right: 1px solid #aeb3bf;
  border-bottom: 1px solid #aeb3bf;
  border-radius: 0 0 4px 0;
  clip-path: polygon(0 0, 100% 0, 100% 100%, 10px 100%);
  color: #1c2430;
}

.vtab.active {
  padding-left: 9px;
  background: #fff;
}

.vtab.plus {
  width: 26px;
  padding: 5px 0 0 12px;
}

.panel {
  display: flex;
  flex-direction: column;
  flex: none;
  width: 193px;
  margin-left: 7px;
  padding-top: 3px;
  background: #e1e4ec;
}

.panel .grip {
  margin: 0;
}

.ptabs {
  position: relative;
  display: flex;
  align-items: flex-end;
  gap: 2px;
  height: 24px;
  padding-left: 2px;
  border-bottom: 1px solid #a9aeb9;
}

.ptab {
  display: flex;
  align-items: center;
  gap: 3px;
  width: 41px;
  height: 20px;
  padding-left: 3px;
  background: #d9dde8;
  border: 1px solid #b4b8c4;
  border-bottom: none;
  border-radius: 5px 12px 0 0;
}

.ptab.active {
  background: #fff;
}

.ptabs .cog {
  position: absolute;
  right: 0;
  top: 7px;
}

.ptools {
  display: flex;
  align-items: center;
  height: 21px;
  padding-left: 2px;
  background: #eceef2;
  border-bottom: 1px solid #aeb3bd;
}

.ptools svg {
  flex: none;
  width: 16px;
  height: 16px;
  margin-right: 4.700px;
}

.layers {
  flex: 1;
  background: #fff;
  border-left: 1px solid #aeb3bd;
  font-size: 11.200px;
}

.lhead,
.lrow {
  display: grid;
  grid-template-columns: 79px 17px 18px 16px 17px 1fr;
  align-items: center;
}

.lhead {
  height: 25px;
}

.lhead span {
  padding-left: 6px;
}

.lhead i {
  height: 25px;
  border-left: 1px solid #d8dae0;
}

.lhead .mat {
  padding-left: 6px;
  border-left: 1px solid #d8dae0;
  font-size: 10.500px;
  line-height: 25px;
  white-space: nowrap;
}

.lrow {
  height: 17px;
  border-bottom: 1px dotted #dcdcdc;
}

.lrow span {
  padding-left: 8px;
}

.lrow.current span {
  padding-left: 9px;
  font-size: 12px;
  font-weight: bold;
}

.ic {
  justify-self: center;
  width: 13px;
  height: 14px;
}

.swatch {
  display: block;
  width: 12px;
  height: 12px;
  border: 1px solid #000;
  justify-self: center;
}

.black { background: #000; }
.gray { background: #666; }
.red { background: #f00; }
.blue { background: #00f; }
.green { background: #007f00; }

.mball {
  width: 13px;
  height: 13px;
  margin-left: 3px;
  border: 1px solid #ececec;
  border-radius: 50%;
}

.hscroll {
  display: flex;
  align-items: center;
  gap: 6px;
  height: 20px;
  padding: 0 5px 3px;
  background: #f0f0f0;
  border-left: 1px solid #aeb3bd;
}

.track {
  flex: 1;
  height: 17px;
}

.thumb {
  width: 74px;
  height: 17px;
  background: #cdcdcd;
}

/* status */
.status {
  display: grid;
  grid-template-columns: 57px 87px 88px 88px 88px 173px 77px 47px 53px 54px 85px 66px 109px 45px 1fr;
  height: 20px;
  background: #e1e4ec;
  border-top: 1px solid #a9afbb;
  color: #1a2230;
}

.status span {
  line-height: 19px;
  text-align: center;
  border-left: 1px solid #b2b7c2;
}

.status span:first-child {
  border-left: none;
}

.status .layercell {
  display: flex;
  align-items: center;
  gap: 1px;
  padding-left: 3px;
}

.layercell .swatch {
  width: 14px;
  height: 13px;
}

.status .on {
  background: #e4f0fa;
  font-weight: bold;
}

.status .memory {
  padding-left: 3px;
  text-align: left;
}

/* taskbar */
.taskbar {
  display: flex;
  align-items: stretch;
  height: 40px;
  background: linear-gradient(100deg, #060606 60%, #161616 75%, #070707 90%);
  color: #fff;
}

.start {
  display: flex;
  align-items: center;
  justify-content: center;
  width: 48px;
  background: #000;
}

.search {
  width: 344px;
  padding-left: 12px;
  background: #333;
  color: #a3a3a3;
  font-size: 14.900px;
  line-height: 42px;
}

.tasks {
  display: flex;
}

.task {
  display: flex;
  align-items: center;
  justify-content: center;
  width: 49px;
}

.task.running {
  width: 48px;
  margin-left: -1px;
  background: #333;
}

.tray {
  display: flex;
  align-items: center;
  gap: 9px;
  margin-left: auto;
  padding-right: 1px;
}

.clock {
  width: 62px;
  margin-left: 4px;
  font-size: 13px;
  line-height: 20px;
  text-align: center;
  color: #ddd;
}
```
FILE: script.js
```js
// draws the Rhino top view: grid, mesh and the four fold panels
var NS = "http://www.w3.org/2000/svg";
var model = document.getElementById("model");

var COLORS = {
  b: "#5561f2", B: "#0000ff",
  g: "#5f8f6a", G: "#007800",
  r: "#f26a6a", R: "#ff0000"
};

function add(tag, attrs) {
  var el = document.createElementNS(NS, tag);
  for (var k in attrs) el.setAttribute(k, attrs[k]);
  model.appendChild(el);
  return el;
}

function line(x1, y1, x2, y2, color, w) {
  add("line", { x1: x1, y1: y1, x2: x2, y2: y2, stroke: color, "stroke-width": w || 1 });
}

// upper case codes are the saturated lines of the screenshot
function crease(x1, y1, x2, y2, code) {
  var strong = code === code.toUpperCase();
  add("line", {
    x1: x1, y1: y1, x2: x2, y2: y2, stroke: COLORS[code],
    "stroke-width": strong ? 1.3 : 1.2,
    "shape-rendering": strong && x1 === x2 ? "crispEdges" : "auto"
  });
}

// row heights shared by every panel
var rows = [];
for (var i = 0; i <= 12; i++) rows.push(221.7 + i * 35.83);

// grid
var step = 20.3;
for (var n = -10; n < 45; n++) {
  var gx = 273 + n * step;
  line(gx, 156, gx, 687, n % 10 === 0 ? "#858b94" : "#939aa4", n % 10 === 0 ? 1.5 : 1);
}
for (var m = -1; m < 26; m++) {
  var gy = 660.5 - m * step;
  line(65, gy, 1166, gy, m % 10 === 0 ? "#858b94" : "#939aa4", m % 10 === 0 ? 1.5 : 1);
}

// gray surface mesh over the first panel
var meshX = [40, 73, 110, 146, 178, 211, 246, 282, 316, 352, 386, 421, 454, 490, 523, 558];
meshX.forEach(function (zx) {
  var x = 270 + zx / 3;
  line(x, 185.3, x, 651.7, "#747677");
});
rows.forEach(function (y) { line(283.3, y, 456, y, "#747677"); });
line(283.3, 185.3, 456, 185.3, "#555");

// frame and axes
line(273, 174, 1003, 174, "#62666b", 1.5);
line(1003.5, 174, 1003.5, 660, "#000");
line(273, 156, 273, 660, "#3d7a40", 2);
line(273, 660.5, 1003, 660.5, "#6f3238", 2);
line(1003, 660.5, 1166, 660.5, "#9c3535", 1.5);

// x / y marker
line(101, 620, 101, 650, "#6c727b", 1.5);
line(101, 650, 132, 650, "#6c727b", 1.5);
[["y", 102, 623], ["x", 133, 652]].forEach(function (t) {
  var label = add("text", { x: t[1], y: t[2], fill: "#6c727b", "font-size": 13, "font-family": "Liberation Sans, sans-serif", "font-weight": "bold" });
  label.textContent = t[0];
});

// diagonals run edge row -> vertical row on the left, vertical row -> edge row on the right
var typeA = {
  diag: [[1, 0], [1, 2], [2, 3], [3, 4], [5, 4], [6, 5], [7, 6], [7, 8], [8, 9], [9, 10], [11, 10]],
  diagColor: "bbgbbgbbgbb",
  blue: [[0, 1], [2, 1], [4, 3], [4, 5], [6, 7], [8, 7], [10, 9], [10, 11]],
  green: [[3, 2], [5, 6], [9, 8]]
};
var typeB = {
  diag: [[0, 1], [2, 1], [3, 2], [4, 3], [4, 5], [5, 6], [6, 7], [8, 7], [9, 8], [10, 9], [10, 11]],
  diagColor: "ggbggbggbgg",
  blue: [[2, 3], [6, 5], [8, 9]],
  green: [[1, 0], [1, 2], [3, 4], [5, 4], [7, 6], [7, 8], [9, 10], [11, 10]]
};

// "10" strings: 1 = faded line, 0 = strong line. verticals: color + end row.
var panels = [
  { x: 283.3, type: typeA, left: "10000001111", right: "10011101001",
    lTop: 185.3, l: "b3 g5 b6 g8 b9 g12", rTop: rows[0], r: "G2 B3 G5 B6 G8 B12" },
  { x: 462.7, type: typeB, left: "10000001111", right: "11100111111",
    lTop: rows[0], l: "b2 g3 b5 g6 b8 g9 b11 g12", rTop: 185.3, r: "g0 b2 g3 b5 g9 b11" },
  { x: 640.7, type: typeA, left: "01111110010", right: "11000001111",
    lTop: 185.3, l: "b0 g2 b3 g5 b6 g8 b9 g11", rTop: rows[0], r: "g2 b3 g5 b6 g8 b12" },
  { x: 820.3, type: typeB, left: "01111110000", right: "10001001111",
    lTop: rows[0], l: "B2 G3 B5 G6 B8 G9 B11 G12", rTop: 185.3, r: "g3 b6 g9 b11" }
];

function vertical(x, top, spec) {
  var y = top;
  spec.split(" ").forEach(function (part) {
    var end = rows[parseInt(part.slice(1), 10)];
    crease(x, y, x, end, part[0]);
    y = end;
  });
}

function curve(L, R, from, to, color) {
  var y1 = rows[from], y2 = rows[to];
  add("path", {
    d: "M" + L + " " + y1 + "Q" + (L + (R - L) * 0.5) + " " + y1 + " " + R + " " + y2,
    fill: "none", stroke: color, "stroke-width": 1.1
  });
}

panels.forEach(function (p) {
  var L = p.x + 36, R = p.x + 137.2, W = p.x + 172.8;
  vertical(L, p.lTop, p.l);
  vertical(R, p.rTop, p.r);
  p.type.blue.forEach(function (c) { curve(L, R, c[0], c[1], "#1a2cf5"); });
  p.type.green.forEach(function (c) { curve(L, R, c[0], c[1], "#1d7d28"); });
  p.type.diag.forEach(function (d, i) {
    var col = p.type.diagColor[i];
    crease(p.x, rows[d[0]], L, rows[d[1]], p.left[i] === "1" ? col : col.toUpperCase());
    crease(R, rows[d[0]], W, rows[d[1]], p.right[i] === "1" ? col : col.toUpperCase());
  });
});

// red outlines
var edges = [
  [283.3, 206.7, 651.7, "r", 1], [462.7, 186, 630.7, "r", 1.5], [635.7, 221, 651.7, "r", 2],
  [640.7, 206.7, 651.7, "r", 1.5], [813.7, 185, 616.7, "r", 2],
  [820.3, 186, 630.7, "R", 2], [993.3, 221, 651.7, "r", 1.5]
];
edges.forEach(function (e) { line(e[0], e[1], e[0], e[2], COLORS[e[3]], e[4]); });

// gear outlines, traced from the model at 3x: x = ox + zx / 3, y = oy + zy / 3
function gear(ox, oy, pts) {
  var out = [];
  for (var i = 0; i < pts.length; i += 2) {
    out.push((ox + pts[i] / 3).toFixed(1) + "," + (oy + pts[i + 1] / 3).toFixed(1));
  }
  add("polyline", { points: out.join(" "), fill: "none", stroke: "#f52f2f", "stroke-width": 1 });
}

var topOdd = [40, 110, 52, 98, 73, 118, 107, 85, 88, 64, 122, 30, 146, 46, 178, 46, 178, 20, 211, 20, 211, 47, 246, 55, 252, 27, 288, 36, 283, 65, 318, 73, 327, 47, 360, 56, 352, 90, 384, 105, 404, 83, 436, 100, 422, 130, 452, 153];
var topOddEnd = [425, 130, 470, 97, 490, 113, 522, 83, 503, 62, 538, 25, 558, 45];
var topEven = [578, 48, 612, 80, 635, 60, 669, 95, 648, 117, 684, 152, 682, 122, 717, 122, 717, 152, 752, 150, 748, 118, 782, 113, 788, 144, 821, 138, 813, 105, 847, 97, 857, 125, 888, 113, 880, 82, 910, 67, 927, 93, 958, 73, 941, 47, 971, 25, 991, 46, 1022, 85, 1051, 65, 1085, 98, 1065, 121, 1097, 153];
var botFirst = [
  [40, 695, 73, 662, 96, 683, 130, 648, 110, 627, 147, 588],
  [147, 620, 178, 620],
  [180, 590, 208, 590, 210, 622, 243, 628, 250, 600, 280, 605, 275, 635, 308, 645, 317, 618, 348, 628, 338, 660, 372, 677, 388, 652, 418, 670, 402, 695, 432, 720, 490, 658, 512, 680, 545, 645, 525, 625, 557, 590]
];
var botEven = [578, 632, 590, 645, 612, 623, 647, 660, 628, 682, 660, 713, 686, 695, 717, 695, 717, 718, 752, 718, 752, 690, 790, 688, 795, 714, 828, 708, 822, 678, 856, 670, 866, 696, 898, 682, 890, 650, 922, 636, 940, 660, 975, 640, 960, 610, 990, 590];
var botEvenEnd = [975, 610, 1007, 645, 1030, 628, 1062, 660, 1042, 683, 1077, 717, 1097, 695];
var botThird = [2, 695, 35, 662, 58, 683, 92, 648, 72, 627, 107, 590, 107, 620, 141, 620, 141, 590, 172, 590, 172, 622, 206, 628, 212, 600, 243, 605, 238, 635, 270, 645, 281, 618, 312, 628, 302, 660, 335, 677, 350, 652, 382, 670, 366, 695, 396, 720, 453, 658, 475, 680, 508, 645, 488, 625, 521, 590];

[270, 270 + 357.4].forEach(function (ox) {
  gear(ox, 170, topOdd);
  gear(ox, 170, topOddEnd);
});
[270, 270 + 357.6].forEach(function (ox) {
  gear(ox, 170, topEven);
  gear(ox, 420, botEven);
  gear(ox, 420, botEvenEnd);
});
botFirst.forEach(function (pts) { gear(270, 420, pts); });
gear(640, 420, botThird);

// control points along the top of the mesh
meshX.forEach(function (zx) {
  add("rect", { x: 270 + zx / 3 - 2, y: 183.3, width: 4, height: 4, fill: "#fff", stroke: "#555", "stroke-width": 1 });
});
```
